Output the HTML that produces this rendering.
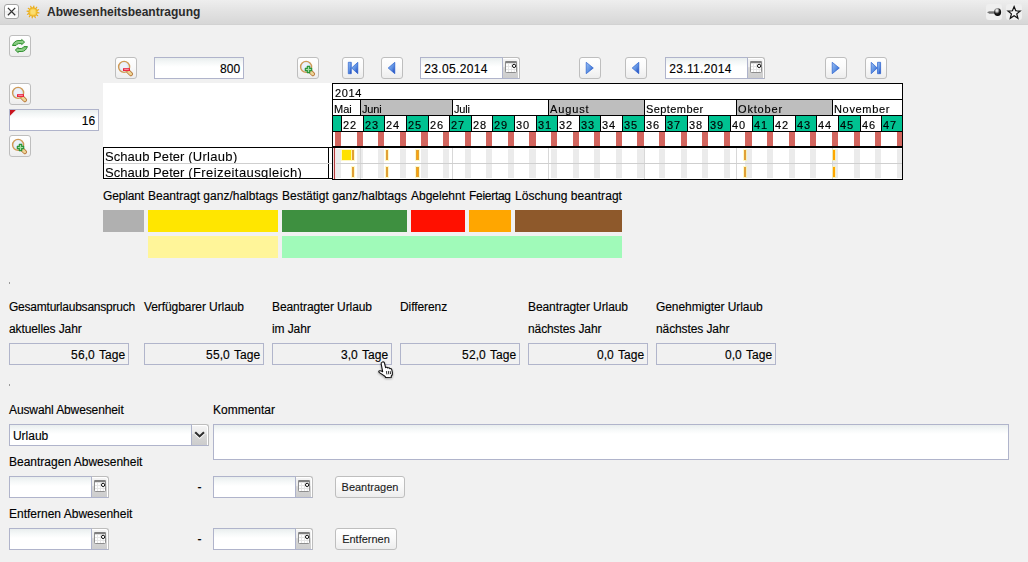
<!DOCTYPE html>
<html><head><meta charset="utf-8"><title>Abwesenheitsbeantragung</title>
<style>
html,body{margin:0;padding:0;}
body{width:1028px;height:562px;background:#F1F1F1;overflow:hidden;position:relative;font-family:"Liberation Sans",sans-serif;font-size:12px;color:#000;-webkit-text-stroke:0.14px #000;}
div{position:absolute;box-sizing:border-box;}
.t{white-space:pre;color:#000;}
.g{white-space:pre;color:#000;font-size:11px;line-height:14px;will-change:transform;-webkit-text-stroke:0.15px #000;}
.btn{border:1px solid #BEBEBE;border-radius:3px;background:linear-gradient(#FFFFFF,#FAFAFA 45%,#EDEDED);}
.inp{border:1px solid #B0B4CB;background:linear-gradient(#E9EEEE,#F4F7F7 4px,#FFFFFF 9px);}
.iv{position:absolute;right:2.7px;top:0.8px;letter-spacing:0.1px;word-spacing:0.8px;line-height:20px;font-size:12px;white-space:pre;}
.calb{border:1px solid #BDBDBD;border-left:1px solid #AEB3CB;border-bottom:1px solid #AEB3CB;border-top-right-radius:3px;background:linear-gradient(#F5F5F5,#EAEAEA 44%,#D7D7D7 48%,#CDCDCD);box-shadow:inset -1px 1px 0 #FFFFFF;}
.ro{border:1px solid #B1B5CB;background:#F1F1F1;}
</style></head><body>
<div style="left:0px;top:0px;width:1028px;height:25px;background:linear-gradient(#EEEEEE,#E4E4E4 40%,#D7D7D7);border-bottom:1px solid #D2D2D2;"></div>
<div style="left:4px;top:4px;width:15px;height:15px;border:1px solid #A4A4A4;border-radius:3px;background:linear-gradient(#FFFFFF,#FFFFFF 40%,#EFEFEF 50%,#FFFFFF);"><svg width="13" height="13" viewBox="0 0 13 13" style="position:absolute;left:0;top:0"><path d="M2.9 2.9 L10.2 10.2 M10.2 2.9 L2.9 10.2" stroke="#333" stroke-width="1.25"/></svg></div>
<svg width="16" height="16" viewBox="-8 -8 16 16" style="position:absolute;left:24.5px;top:3.9px"><circle r="7.2" fill="#E4E6F4" opacity="0.5"/><path d="M0 -4.4 L0 -6.0" stroke="#EBAE1A" stroke-width="1.25" stroke-linecap="round" transform="rotate(8)"/><path d="M0 -4.4 L0 -6.0" stroke="#EBAE1A" stroke-width="1.25" stroke-linecap="round" transform="rotate(38)"/><path d="M0 -4.4 L0 -6.0" stroke="#EBAE1A" stroke-width="1.25" stroke-linecap="round" transform="rotate(68)"/><path d="M0 -4.4 L0 -6.0" stroke="#EBAE1A" stroke-width="1.25" stroke-linecap="round" transform="rotate(98)"/><path d="M0 -4.4 L0 -6.0" stroke="#EBAE1A" stroke-width="1.25" stroke-linecap="round" transform="rotate(128)"/><path d="M0 -4.4 L0 -6.0" stroke="#EBAE1A" stroke-width="1.25" stroke-linecap="round" transform="rotate(158)"/><path d="M0 -4.4 L0 -6.0" stroke="#EBAE1A" stroke-width="1.25" stroke-linecap="round" transform="rotate(188)"/><path d="M0 -4.4 L0 -6.0" stroke="#EBAE1A" stroke-width="1.25" stroke-linecap="round" transform="rotate(218)"/><path d="M0 -4.4 L0 -6.0" stroke="#EBAE1A" stroke-width="1.25" stroke-linecap="round" transform="rotate(248)"/><path d="M0 -4.4 L0 -6.0" stroke="#EBAE1A" stroke-width="1.25" stroke-linecap="round" transform="rotate(278)"/><path d="M0 -4.4 L0 -6.0" stroke="#EBAE1A" stroke-width="1.25" stroke-linecap="round" transform="rotate(308)"/><path d="M0 -4.4 L0 -6.0" stroke="#EBAE1A" stroke-width="1.25" stroke-linecap="round" transform="rotate(338)"/><circle r="4.1" fill="#F8D04E" stroke="#EBAE1A" stroke-width="1.1"/><circle r="2.4" fill="#FBDD72"/></svg>
<div class="t" style="left:47px;top:3.84px;font-size:12px;line-height:16px;font-weight:bold;color:#2B2B2B;-webkit-text-stroke:0;">Abwesenheitsbeantragung</div>
<div style="left:986px;top:4px;width:16px;height:16px;background:#EFEFEF;border-radius:3px;"><svg width="16" height="16" viewBox="0 0 16 16" style="position:absolute;left:0;top:0"><defs><radialGradient id="pg" cx="0.4" cy="0.3" r="0.75"><stop offset="0" stop-color="#FFFFFF"/><stop offset="0.22" stop-color="#C8C8C8"/><stop offset="0.55" stop-color="#1C1C1C"/><stop offset="1" stop-color="#000"/></radialGradient></defs><path d="M1.1 8.3 L3.2 6.9 L9 6.9 L9 9.6 L3.2 9.6 Z" fill="#9A9A9A"/><path d="M1.1 8.3 L3.2 8.3 L9 8.3 L9 9.6 L3.2 9.6 Z" fill="#686868"/><ellipse cx="11.6" cy="8.1" rx="3.5" ry="3.9" fill="url(#pg)"/></svg></div>
<div style="left:1006px;top:4px;width:16px;height:16px;background:#EFEFEF;border-radius:3px;"><svg width="16" height="16" viewBox="0 0 16 16" style="position:absolute;left:0;top:0"><path transform="translate(8.1 8.7) scale(0.92) translate(-8.2 -8.1)" d="M8.2 1.4 L10 6 L14.9 6.3 L11.1 9.4 L12.4 14.2 L8.2 11.5 L4 14.2 L5.3 9.4 L1.5 6.3 L6.4 6 Z" fill="#F4F4F4" stroke="#111" stroke-width="1.3" stroke-linejoin="miter"/></svg></div>
<div class="btn" style="left:9px;top:35px;width:22px;height:22px;"><svg width="22" height="22" viewBox="0 0 22 22" style="position:absolute;left:0;top:0"><defs><linearGradient id="rg" x1="0" y1="0" x2="0" y2="1"><stop offset="0" stop-color="#A8DCA0"/><stop offset="1" stop-color="#6FBF6A"/></linearGradient></defs><path d="M2.5 9.5 C3.4 6.7 5.4 4.7 8 4.6 L11.7 4.6 L11.7 3.5 L14.6 6.1 L11.7 8.6 L11.7 7.6 L8.6 7.6 C7.4 7.8 6.6 8.5 6 9.5 Z" fill="url(#rg)" stroke="#2E8F2E" stroke-width="1" stroke-linejoin="round"/><path transform="rotate(180 9.95 10.05)" d="M2.5 9.5 C3.4 6.7 5.4 4.7 8 4.6 L11.7 4.6 L11.7 3.5 L14.6 6.1 L11.7 8.6 L11.7 7.6 L8.6 7.6 C7.4 7.8 6.6 8.5 6 9.5 Z" fill="url(#rg)" stroke="#2E8F2E" stroke-width="1" stroke-linejoin="round"/></svg></div>
<div class="btn" style="left:115px;top:57px;width:22px;height:22px;"><svg width="22" height="22" viewBox="0 0 22 22" style="position:absolute;left:-1.1px;top:-1.1px"><path d="M12.6 13.8 L15.9 17.1" stroke="#B9783A" stroke-width="4.3" stroke-linecap="round"/><path d="M12.8 14 L15.8 17" stroke="#EDD596" stroke-width="2.5" stroke-linecap="round"/><circle cx="9.1" cy="9.9" r="5.5" fill="#E3EAF7" stroke="#CF9A55" stroke-width="1.4"/><circle cx="8.6" cy="9.2" r="3.4" fill="#EEF2FA" opacity="0.8"/><rect x="8" y="11.2" width="7" height="2.8" fill="#EA1F3C"/><rect x="9.2" y="12.2" width="4.6" height="0.9" fill="#F9A9B3"/></svg></div>
<div class="inp" style="left:154px;top:57px;width:90px;height:22px;"><span class="iv">800</span></div>
<div class="btn" style="left:297px;top:57px;width:22px;height:22px;"><svg width="22" height="22" viewBox="0 0 22 22" style="position:absolute;left:-1.1px;top:-1.1px"><path d="M12.6 13.8 L15.9 17.1" stroke="#B9783A" stroke-width="4.3" stroke-linecap="round"/><path d="M12.8 14 L15.8 17" stroke="#EDD596" stroke-width="2.5" stroke-linecap="round"/><circle cx="9.1" cy="9.9" r="5.5" fill="#E3EAF7" stroke="#CF9A55" stroke-width="1.4"/><circle cx="8.6" cy="9.2" r="3.4" fill="#EEF2FA" opacity="0.8"/><path d="M10 9 h3 v2 h2 v3 h-2 v2 h-3 v-2 h-2 v-3 h2 z" fill="#2F9A3C" stroke="#1F8A2E" stroke-width="0.5"/><path d="M10.9 10 h1.2 v2.1 h2 v1 h-2 v2 h-1.2 v-2 h-2 v-1 h2 z" fill="#A6DDA6"/></svg></div>
<div class="btn" style="left:342px;top:57px;width:22px;height:22px;"><svg width="22" height="22" viewBox="0 0 22 22" style="position:absolute;left:-0.9px;top:-0.85px"><defs><linearGradient id="bgfirst" x1="0" y1="0" x2="1" y2="1"><stop offset="0" stop-color="#9CC0F2"/><stop offset="0.55" stop-color="#5C90E2"/><stop offset="1" stop-color="#1438B4"/></linearGradient></defs><rect x="6.3" y="5.3" width="3" height="11.4" fill="url(#bgfirst)" stroke="#2A62D0" stroke-width="0.7" stroke-linejoin="round"/><path d="M9.6 11 L15.8 5.3 L15.8 16.7 Z" fill="url(#bgfirst)" stroke="#2A62D0" stroke-width="0.7" stroke-linejoin="round"/></svg></div>
<div class="btn" style="left:381px;top:57px;width:22px;height:22px;"><svg width="22" height="22" viewBox="0 0 22 22" style="position:absolute;left:-0.9px;top:-0.85px"><defs><linearGradient id="bgprev" x1="0" y1="0" x2="1" y2="1"><stop offset="0" stop-color="#9CC0F2"/><stop offset="0.55" stop-color="#5C90E2"/><stop offset="1" stop-color="#1438B4"/></linearGradient></defs><path d="M7.2 11 L13.8 5.3 L13.8 16.7 Z" fill="url(#bgprev)" stroke="#2A62D0" stroke-width="0.7" stroke-linejoin="round"/></svg></div>
<div class="inp" style="left:420px;top:57px;width:83px;height:22px;"></div>
<div class="calb" style="left:502px;top:57px;width:18px;height:22px;"><svg width="12" height="12" viewBox="0 0 12 12" style="position:absolute;left:2px;top:3px"><rect x="0.5" y="0.5" width="11" height="11" rx="0.8" fill="#fff" stroke="#8E8E8E"/><path d="M0.3 0.9 Q0.3 0.1 1.1 0.1 H10.9 Q11.7 0.1 11.7 0.9 V2.3 H0.3 Z" fill="#808080"/><path d="M3.5 2.6 V11 M6.5 2.6 V11 M9.3 2.6 V11 M1 5.5 H11 M1 8.5 H11" stroke="#E6E6E6" stroke-width="1"/><circle cx="9.1" cy="4.9" r="1.65" fill="#fff" stroke="#000" stroke-width="0.95"/></svg></div>
<div class="t" style="left:424.3px;top:60.84px;font-size:12px;line-height:16px;letter-spacing:0.33px;">23.05.2014</div>
<div class="btn" style="left:579px;top:57px;width:22px;height:22px;"><svg width="22" height="22" viewBox="0 0 22 22" style="position:absolute;left:-0.9px;top:-0.85px"><defs><linearGradient id="bgnext" x1="0" y1="0" x2="1" y2="1"><stop offset="0" stop-color="#9CC0F2"/><stop offset="0.55" stop-color="#5C90E2"/><stop offset="1" stop-color="#1438B4"/></linearGradient></defs><path d="M14.3 11 L7.2 5.3 L7.2 16.7 Z" fill="url(#bgnext)" stroke="#2A62D0" stroke-width="0.7" stroke-linejoin="round"/></svg></div>
<div class="btn" style="left:625px;top:57px;width:22px;height:22px;"><svg width="22" height="22" viewBox="0 0 22 22" style="position:absolute;left:-0.9px;top:-0.85px"><defs><linearGradient id="bgprev" x1="0" y1="0" x2="1" y2="1"><stop offset="0" stop-color="#9CC0F2"/><stop offset="0.55" stop-color="#5C90E2"/><stop offset="1" stop-color="#1438B4"/></linearGradient></defs><path d="M7.2 11 L13.8 5.3 L13.8 16.7 Z" fill="url(#bgprev)" stroke="#2A62D0" stroke-width="0.7" stroke-linejoin="round"/></svg></div>
<div class="inp" style="left:665px;top:57px;width:83px;height:22px;"></div>
<div class="calb" style="left:747px;top:57px;width:18px;height:22px;"><svg width="12" height="12" viewBox="0 0 12 12" style="position:absolute;left:2px;top:3px"><rect x="0.5" y="0.5" width="11" height="11" rx="0.8" fill="#fff" stroke="#8E8E8E"/><path d="M0.3 0.9 Q0.3 0.1 1.1 0.1 H10.9 Q11.7 0.1 11.7 0.9 V2.3 H0.3 Z" fill="#808080"/><path d="M3.5 2.6 V11 M6.5 2.6 V11 M9.3 2.6 V11 M1 5.5 H11 M1 8.5 H11" stroke="#E6E6E6" stroke-width="1"/><circle cx="9.1" cy="4.9" r="1.65" fill="#fff" stroke="#000" stroke-width="0.95"/></svg></div>
<div class="t" style="left:669.3px;top:60.84px;font-size:12px;line-height:16px;letter-spacing:0.33px;">23.11.2014</div>
<div class="btn" style="left:825px;top:57px;width:22px;height:22px;"><svg width="22" height="22" viewBox="0 0 22 22" style="position:absolute;left:-0.9px;top:-0.85px"><defs><linearGradient id="bgnext" x1="0" y1="0" x2="1" y2="1"><stop offset="0" stop-color="#9CC0F2"/><stop offset="0.55" stop-color="#5C90E2"/><stop offset="1" stop-color="#1438B4"/></linearGradient></defs><path d="M14.3 11 L7.2 5.3 L7.2 16.7 Z" fill="url(#bgnext)" stroke="#2A62D0" stroke-width="0.7" stroke-linejoin="round"/></svg></div>
<div class="btn" style="left:865px;top:57px;width:22px;height:22px;"><svg width="22" height="22" viewBox="0 0 22 22" style="position:absolute;left:-0.9px;top:-0.85px"><defs><linearGradient id="bglast" x1="0" y1="0" x2="1" y2="1"><stop offset="0" stop-color="#9CC0F2"/><stop offset="0.55" stop-color="#5C90E2"/><stop offset="1" stop-color="#1438B4"/></linearGradient></defs><path d="M12.3 11 L6.2 5.3 L6.2 16.7 Z" fill="url(#bglast)" stroke="#2A62D0" stroke-width="0.7" stroke-linejoin="round"/><rect x="12.5" y="5.3" width="3.1" height="11.4" fill="url(#bglast)" stroke="#2A62D0" stroke-width="0.7" stroke-linejoin="round"/></svg></div>
<div class="btn" style="left:9px;top:83px;width:22px;height:22px;"><svg width="22" height="22" viewBox="0 0 22 22" style="position:absolute;left:-1.1px;top:-1.1px"><path d="M12.6 13.8 L15.9 17.1" stroke="#B9783A" stroke-width="4.3" stroke-linecap="round"/><path d="M12.8 14 L15.8 17" stroke="#EDD596" stroke-width="2.5" stroke-linecap="round"/><circle cx="9.1" cy="9.9" r="5.5" fill="#E3EAF7" stroke="#CF9A55" stroke-width="1.4"/><circle cx="8.6" cy="9.2" r="3.4" fill="#EEF2FA" opacity="0.8"/><rect x="8" y="11.2" width="7" height="2.8" fill="#EA1F3C"/><rect x="9.2" y="12.2" width="4.6" height="0.9" fill="#F9A9B3"/></svg></div>
<div class="inp" style="left:9px;top:109px;width:90px;height:22px;"><span class="iv">16</span></div>
<svg width="7" height="7" style="position:absolute;left:10px;top:110px"><path d="M0 0 H5.8 L0 5.8 Z" fill="#C8141E"/></svg>
<div class="btn" style="left:9px;top:135px;width:22px;height:22px;"><svg width="22" height="22" viewBox="0 0 22 22" style="position:absolute;left:-1.1px;top:-1.1px"><path d="M12.6 13.8 L15.9 17.1" stroke="#B9783A" stroke-width="4.3" stroke-linecap="round"/><path d="M12.8 14 L15.8 17" stroke="#EDD596" stroke-width="2.5" stroke-linecap="round"/><circle cx="9.1" cy="9.9" r="5.5" fill="#E3EAF7" stroke="#CF9A55" stroke-width="1.4"/><circle cx="8.6" cy="9.2" r="3.4" fill="#EEF2FA" opacity="0.8"/><path d="M10 9 h3 v2 h2 v3 h-2 v2 h-3 v-2 h-2 v-3 h2 z" fill="#2F9A3C" stroke="#1F8A2E" stroke-width="0.5"/><path d="M10.9 10 h1.2 v2.1 h2 v1 h-2 v2 h-1.2 v-2 h-2 v-1 h2 z" fill="#A6DDA6"/></svg></div>
<div style="left:103px;top:83px;width:800px;height:97px;background:#fff;"></div>
<div style="left:333px;top:100px;width:27px;height:15px;background:#fff;"></div>
<div style="left:361px;top:100px;width:91px;height:15px;background:#BEBEBE;"></div>
<div style="left:360px;top:100px;width:1px;height:15px;background:#000;"></div>
<div style="left:453px;top:100px;width:95px;height:15px;background:#fff;"></div>
<div style="left:452px;top:100px;width:1px;height:15px;background:#000;"></div>
<div style="left:549px;top:100px;width:95px;height:15px;background:#BEBEBE;"></div>
<div style="left:548px;top:100px;width:1px;height:15px;background:#000;"></div>
<div style="left:645px;top:100px;width:91px;height:15px;background:#fff;"></div>
<div style="left:644px;top:100px;width:1px;height:15px;background:#000;"></div>
<div style="left:737px;top:100px;width:95px;height:15px;background:#BEBEBE;"></div>
<div style="left:736px;top:100px;width:1px;height:15px;background:#000;"></div>
<div style="left:833px;top:100px;width:69px;height:15px;background:#fff;"></div>
<div style="left:832px;top:100px;width:1px;height:15px;background:#000;"></div>
<div style="left:333px;top:116px;width:8px;height:15px;background:#00C291;overflow:hidden;"></div>
<div style="left:341px;top:116px;width:22px;height:15px;background:#fff;overflow:hidden;"><div class="g" style="left:2.4px;top:2.2px;letter-spacing:0.85px;">22</div></div>
<div style="left:341px;top:116px;width:1px;height:15px;background:#000;"></div>
<div style="left:363px;top:116px;width:21px;height:15px;background:#00C291;overflow:hidden;"><div class="g" style="left:2.4px;top:2.2px;letter-spacing:0.85px;">23</div></div>
<div style="left:363px;top:116px;width:1px;height:15px;background:#000;"></div>
<div style="left:384px;top:116px;width:22px;height:15px;background:#fff;overflow:hidden;"><div class="g" style="left:2.4px;top:2.2px;letter-spacing:0.85px;">24</div></div>
<div style="left:384px;top:116px;width:1px;height:15px;background:#000;"></div>
<div style="left:406px;top:116px;width:22px;height:15px;background:#00C291;overflow:hidden;"><div class="g" style="left:2.4px;top:2.2px;letter-spacing:0.85px;">25</div></div>
<div style="left:406px;top:116px;width:1px;height:15px;background:#000;"></div>
<div style="left:428px;top:116px;width:21px;height:15px;background:#fff;overflow:hidden;"><div class="g" style="left:2.4px;top:2.2px;letter-spacing:0.85px;">26</div></div>
<div style="left:428px;top:116px;width:1px;height:15px;background:#000;"></div>
<div style="left:449px;top:116px;width:22px;height:15px;background:#00C291;overflow:hidden;"><div class="g" style="left:2.4px;top:2.2px;letter-spacing:0.85px;">27</div></div>
<div style="left:449px;top:116px;width:1px;height:15px;background:#000;"></div>
<div style="left:471px;top:116px;width:21px;height:15px;background:#fff;overflow:hidden;"><div class="g" style="left:2.4px;top:2.2px;letter-spacing:0.85px;">28</div></div>
<div style="left:471px;top:116px;width:1px;height:15px;background:#000;"></div>
<div style="left:492px;top:116px;width:22px;height:15px;background:#00C291;overflow:hidden;"><div class="g" style="left:2.4px;top:2.2px;letter-spacing:0.85px;">29</div></div>
<div style="left:492px;top:116px;width:1px;height:15px;background:#000;"></div>
<div style="left:514px;top:116px;width:22px;height:15px;background:#fff;overflow:hidden;"><div class="g" style="left:2.4px;top:2.2px;letter-spacing:0.85px;">30</div></div>
<div style="left:514px;top:116px;width:1px;height:15px;background:#000;"></div>
<div style="left:536px;top:116px;width:21px;height:15px;background:#00C291;overflow:hidden;"><div class="g" style="left:2.4px;top:2.2px;letter-spacing:0.85px;">31</div></div>
<div style="left:536px;top:116px;width:1px;height:15px;background:#000;"></div>
<div style="left:557px;top:116px;width:22px;height:15px;background:#fff;overflow:hidden;"><div class="g" style="left:2.4px;top:2.2px;letter-spacing:0.85px;">32</div></div>
<div style="left:557px;top:116px;width:1px;height:15px;background:#000;"></div>
<div style="left:579px;top:116px;width:21px;height:15px;background:#00C291;overflow:hidden;"><div class="g" style="left:2.4px;top:2.2px;letter-spacing:0.85px;">33</div></div>
<div style="left:579px;top:116px;width:1px;height:15px;background:#000;"></div>
<div style="left:600px;top:116px;width:22px;height:15px;background:#fff;overflow:hidden;"><div class="g" style="left:2.4px;top:2.2px;letter-spacing:0.85px;">34</div></div>
<div style="left:600px;top:116px;width:1px;height:15px;background:#000;"></div>
<div style="left:622px;top:116px;width:22px;height:15px;background:#00C291;overflow:hidden;"><div class="g" style="left:2.4px;top:2.2px;letter-spacing:0.85px;">35</div></div>
<div style="left:622px;top:116px;width:1px;height:15px;background:#000;"></div>
<div style="left:644px;top:116px;width:21px;height:15px;background:#fff;overflow:hidden;"><div class="g" style="left:2.4px;top:2.2px;letter-spacing:0.85px;">36</div></div>
<div style="left:644px;top:116px;width:1px;height:15px;background:#000;"></div>
<div style="left:665px;top:116px;width:22px;height:15px;background:#00C291;overflow:hidden;"><div class="g" style="left:2.4px;top:2.2px;letter-spacing:0.85px;">37</div></div>
<div style="left:665px;top:116px;width:1px;height:15px;background:#000;"></div>
<div style="left:687px;top:116px;width:21px;height:15px;background:#fff;overflow:hidden;"><div class="g" style="left:2.4px;top:2.2px;letter-spacing:0.85px;">38</div></div>
<div style="left:687px;top:116px;width:1px;height:15px;background:#000;"></div>
<div style="left:708px;top:116px;width:22px;height:15px;background:#00C291;overflow:hidden;"><div class="g" style="left:2.4px;top:2.2px;letter-spacing:0.85px;">39</div></div>
<div style="left:708px;top:116px;width:1px;height:15px;background:#000;"></div>
<div style="left:730px;top:116px;width:22px;height:15px;background:#fff;overflow:hidden;"><div class="g" style="left:2.4px;top:2.2px;letter-spacing:0.85px;">40</div></div>
<div style="left:730px;top:116px;width:1px;height:15px;background:#000;"></div>
<div style="left:752px;top:116px;width:21px;height:15px;background:#00C291;overflow:hidden;"><div class="g" style="left:2.4px;top:2.2px;letter-spacing:0.85px;">41</div></div>
<div style="left:752px;top:116px;width:1px;height:15px;background:#000;"></div>
<div style="left:773px;top:116px;width:22px;height:15px;background:#fff;overflow:hidden;"><div class="g" style="left:2.4px;top:2.2px;letter-spacing:0.85px;">42</div></div>
<div style="left:773px;top:116px;width:1px;height:15px;background:#000;"></div>
<div style="left:795px;top:116px;width:21px;height:15px;background:#00C291;overflow:hidden;"><div class="g" style="left:2.4px;top:2.2px;letter-spacing:0.85px;">43</div></div>
<div style="left:795px;top:116px;width:1px;height:15px;background:#000;"></div>
<div style="left:816px;top:116px;width:22px;height:15px;background:#fff;overflow:hidden;"><div class="g" style="left:2.4px;top:2.2px;letter-spacing:0.85px;">44</div></div>
<div style="left:816px;top:116px;width:1px;height:15px;background:#000;"></div>
<div style="left:838px;top:116px;width:22px;height:15px;background:#00C291;overflow:hidden;"><div class="g" style="left:2.4px;top:2.2px;letter-spacing:0.85px;">45</div></div>
<div style="left:838px;top:116px;width:1px;height:15px;background:#000;"></div>
<div style="left:860px;top:116px;width:21px;height:15px;background:#fff;overflow:hidden;"><div class="g" style="left:2.4px;top:2.2px;letter-spacing:0.85px;">46</div></div>
<div style="left:860px;top:116px;width:1px;height:15px;background:#000;"></div>
<div style="left:881px;top:116px;width:21px;height:15px;background:#00C291;overflow:hidden;"><div class="g" style="left:2.4px;top:2.2px;letter-spacing:0.85px;">47</div></div>
<div style="left:881px;top:116px;width:1px;height:15px;background:#000;"></div>
<div style="left:335px;top:132px;width:6px;height:14px;background:#D2665F;"></div>
<div style="left:335px;top:149px;width:6px;height:29px;background:#EBEBEB;"></div>
<div style="left:357px;top:132px;width:6px;height:14px;background:#D2665F;"></div>
<div style="left:357px;top:149px;width:6px;height:29px;background:#EBEBEB;"></div>
<div style="left:378px;top:132px;width:6px;height:14px;background:#D2665F;"></div>
<div style="left:378px;top:149px;width:6px;height:29px;background:#EBEBEB;"></div>
<div style="left:400px;top:132px;width:6px;height:14px;background:#D2665F;"></div>
<div style="left:400px;top:149px;width:6px;height:29px;background:#EBEBEB;"></div>
<div style="left:421px;top:132px;width:7px;height:14px;background:#D2665F;"></div>
<div style="left:421px;top:149px;width:7px;height:29px;background:#EBEBEB;"></div>
<div style="left:443px;top:132px;width:6px;height:14px;background:#D2665F;"></div>
<div style="left:443px;top:149px;width:6px;height:29px;background:#EBEBEB;"></div>
<div style="left:465px;top:132px;width:6px;height:14px;background:#D2665F;"></div>
<div style="left:465px;top:149px;width:6px;height:29px;background:#EBEBEB;"></div>
<div style="left:486px;top:132px;width:6px;height:14px;background:#D2665F;"></div>
<div style="left:486px;top:149px;width:6px;height:29px;background:#EBEBEB;"></div>
<div style="left:508px;top:132px;width:6px;height:14px;background:#D2665F;"></div>
<div style="left:508px;top:149px;width:6px;height:29px;background:#EBEBEB;"></div>
<div style="left:529px;top:132px;width:7px;height:14px;background:#D2665F;"></div>
<div style="left:529px;top:149px;width:7px;height:29px;background:#EBEBEB;"></div>
<div style="left:551px;top:132px;width:6px;height:14px;background:#D2665F;"></div>
<div style="left:551px;top:149px;width:6px;height:29px;background:#EBEBEB;"></div>
<div style="left:573px;top:132px;width:6px;height:14px;background:#D2665F;"></div>
<div style="left:573px;top:149px;width:6px;height:29px;background:#EBEBEB;"></div>
<div style="left:594px;top:132px;width:6px;height:14px;background:#D2665F;"></div>
<div style="left:594px;top:149px;width:6px;height:29px;background:#EBEBEB;"></div>
<div style="left:616px;top:132px;width:6px;height:14px;background:#D2665F;"></div>
<div style="left:616px;top:149px;width:6px;height:29px;background:#EBEBEB;"></div>
<div style="left:637px;top:132px;width:7px;height:14px;background:#D2665F;"></div>
<div style="left:637px;top:149px;width:7px;height:29px;background:#EBEBEB;"></div>
<div style="left:659px;top:132px;width:6px;height:14px;background:#D2665F;"></div>
<div style="left:659px;top:149px;width:6px;height:29px;background:#EBEBEB;"></div>
<div style="left:681px;top:132px;width:6px;height:14px;background:#D2665F;"></div>
<div style="left:681px;top:149px;width:6px;height:29px;background:#EBEBEB;"></div>
<div style="left:702px;top:132px;width:6px;height:14px;background:#D2665F;"></div>
<div style="left:702px;top:149px;width:6px;height:29px;background:#EBEBEB;"></div>
<div style="left:724px;top:132px;width:6px;height:14px;background:#D2665F;"></div>
<div style="left:724px;top:149px;width:6px;height:29px;background:#EBEBEB;"></div>
<div style="left:745px;top:132px;width:7px;height:14px;background:#D2665F;"></div>
<div style="left:745px;top:149px;width:7px;height:29px;background:#EBEBEB;"></div>
<div style="left:767px;top:132px;width:6px;height:14px;background:#D2665F;"></div>
<div style="left:767px;top:149px;width:6px;height:29px;background:#EBEBEB;"></div>
<div style="left:789px;top:132px;width:6px;height:14px;background:#D2665F;"></div>
<div style="left:789px;top:149px;width:6px;height:29px;background:#EBEBEB;"></div>
<div style="left:810px;top:132px;width:6px;height:14px;background:#D2665F;"></div>
<div style="left:810px;top:149px;width:6px;height:29px;background:#EBEBEB;"></div>
<div style="left:832px;top:132px;width:6px;height:14px;background:#D2665F;"></div>
<div style="left:832px;top:149px;width:6px;height:29px;background:#EBEBEB;"></div>
<div style="left:854px;top:132px;width:6px;height:14px;background:#D2665F;"></div>
<div style="left:854px;top:149px;width:6px;height:29px;background:#EBEBEB;"></div>
<div style="left:875px;top:132px;width:6px;height:14px;background:#D2665F;"></div>
<div style="left:875px;top:149px;width:6px;height:29px;background:#EBEBEB;"></div>
<div style="left:897px;top:132px;width:5px;height:14px;background:#D2665F;"></div>
<div style="left:897px;top:149px;width:5px;height:29px;background:#EBEBEB;"></div>
<div style="left:360px;top:148px;width:1px;height:31px;background:#D8D8D8;"></div>
<div style="left:452px;top:148px;width:1px;height:31px;background:#D8D8D8;"></div>
<div style="left:548px;top:148px;width:1px;height:31px;background:#D8D8D8;"></div>
<div style="left:644px;top:148px;width:1px;height:31px;background:#D8D8D8;"></div>
<div style="left:736px;top:148px;width:1px;height:31px;background:#D8D8D8;"></div>
<div style="left:832px;top:148px;width:1px;height:31px;background:#D8D8D8;"></div>
<div style="left:332px;top:83px;width:571px;height:1px;background:#000;"></div>
<div style="left:332px;top:99px;width:571px;height:1px;background:#000;"></div>
<div style="left:332px;top:115px;width:571px;height:1px;background:#000;"></div>
<div style="left:332px;top:131px;width:571px;height:1px;background:#000;"></div>
<div style="left:332px;top:146px;width:571px;height:2px;background:#000;"></div>
<div style="left:332px;top:83px;width:1px;height:97px;background:#000;"></div>
<div style="left:902px;top:83px;width:1px;height:97px;background:#000;"></div>
<div style="left:332px;top:179px;width:571px;height:1px;background:#000;"></div>
<div style="left:104px;top:163px;width:798px;height:1px;background:#CFCFCF;"></div>
<div style="left:332px;top:163px;width:1px;height:1px;background:#000;"></div>
<div style="left:334px;top:148px;width:1px;height:31px;background:#B43C3C;"></div>
<div style="left:333px;top:148px;width:1px;height:31px;background:#F3DCDC;"></div>
<div style="left:335px;top:148px;width:1px;height:31px;background:#F6E4E4;"></div>
<div class="g" style="left:335px;top:86.2px;letter-spacing:0.65px;">2014</div>
<div class="g" style="left:333.8px;top:102.2px;letter-spacing:0px;">Mai</div>
<div class="g" style="left:361.8px;top:102.2px;letter-spacing:-0.2px;">Juni</div>
<div class="g" style="left:453.8px;top:102.2px;letter-spacing:-0.15px;">Juli</div>
<div class="g" style="left:549.8px;top:102.2px;letter-spacing:0.86px;">August</div>
<div class="g" style="left:645.8px;top:102.2px;letter-spacing:0.42px;">September</div>
<div class="g" style="left:737.8px;top:102.2px;letter-spacing:0.83px;">Oktober</div>
<div class="g" style="left:833.8px;top:102.2px;letter-spacing:0.67px;">November</div>
<div style="left:103px;top:147px;width:226px;height:32px;border:1px solid #000;background:#fff;"></div>
<div style="left:104px;top:163px;width:228px;height:1px;background:#CFCFCF;"></div>
<div style="left:328px;top:178px;width:5px;height:1px;background:#000;"></div>
<div style="left:328px;top:147px;width:5px;height:1px;background:#000;"></div>
<div style="left:104px;top:148px;width:224px;height:15px;overflow:hidden;"><div class="t" style="left:1.3px;top:1.3px;font-size:13px;line-height:16px;will-change:transform;-webkit-text-stroke:0.08px #000;"><span style="letter-spacing:0.06px">Schaub Peter </span><span style="letter-spacing:0.3px">(Urlaub)</span></div></div>
<div style="left:104px;top:164px;width:224px;height:14px;overflow:hidden;"><div class="t" style="left:1.3px;top:1.3px;font-size:13px;line-height:16px;will-change:transform;-webkit-text-stroke:0.08px #000;"><span style="letter-spacing:0.06px">Schaub Peter </span><span style="letter-spacing:0.42px">(Freizeitausgleich)</span></div></div>
<div style="left:342px;top:150px;width:9px;height:10px;background:#FFE100;box-shadow:0 0 0 1px rgba(255,240,120,0.45);"></div>
<div style="left:352px;top:150px;width:2px;height:10px;background:#E1A037;box-shadow:0 0 0 1px rgba(255,246,150,0.55);"></div>
<div style="left:352px;top:167px;width:2px;height:10px;background:#E1A037;box-shadow:0 0 0 1px rgba(255,246,150,0.55);"></div>
<div style="left:386px;top:150px;width:2px;height:10px;background:#E1A037;box-shadow:0 0 0 1px rgba(255,246,150,0.55);"></div>
<div style="left:386px;top:167px;width:2px;height:10px;background:#E1A037;box-shadow:0 0 0 1px rgba(255,246,150,0.55);"></div>
<div style="left:416px;top:150px;width:3px;height:10px;background:#E1A037;box-shadow:0 0 0 1px rgba(255,246,150,0.55);"><div style="left:1px;top:1px;right:1px;bottom:1px;background:#FFA600"></div></div>
<div style="left:416px;top:167px;width:3px;height:10px;background:#E1A037;box-shadow:0 0 0 1px rgba(255,246,150,0.55);"><div style="left:1px;top:1px;right:1px;bottom:1px;background:#FFA600"></div></div>
<div style="left:744px;top:150px;width:2px;height:10px;background:#E1A037;box-shadow:0 0 0 1px rgba(255,246,150,0.55);"></div>
<div style="left:744px;top:167px;width:2px;height:10px;background:#E1A037;box-shadow:0 0 0 1px rgba(255,246,150,0.55);"></div>
<div style="left:833px;top:150px;width:2px;height:10px;background:#FFA600;box-shadow:0 0 0 1px rgba(255,246,150,0.55);"></div>
<div style="left:833px;top:167px;width:2px;height:10px;background:#FFA600;box-shadow:0 0 0 1px rgba(255,246,150,0.55);"></div>
<div class="t" style="left:103px;top:187.64px;font-size:12px;line-height:16px;letter-spacing:-0.17px;">Geplant</div>
<div class="t" style="left:148px;top:187.64px;font-size:12px;line-height:16px;letter-spacing:0px;">Beantragt ganz/halbtags</div>
<div class="t" style="left:282px;top:187.64px;font-size:12px;line-height:16px;letter-spacing:0.01px;">Bestätigt ganz/halbtags</div>
<div class="t" style="left:411px;top:187.64px;font-size:12px;line-height:16px;letter-spacing:0px;">Abgelehnt</div>
<div class="t" style="left:469px;top:187.64px;font-size:12px;line-height:16px;letter-spacing:-0.29px;">Feiertag</div>
<div class="t" style="left:515px;top:187.64px;font-size:12px;line-height:16px;letter-spacing:0.05px;">Löschung beantragt</div>
<div style="left:103px;top:210px;width:41px;height:22px;background:#B0B0B0;"></div>
<div style="left:148px;top:210px;width:130px;height:22px;background:#FFE600;"></div>
<div style="left:282px;top:210px;width:125px;height:22px;background:#3E9040;"></div>
<div style="left:411px;top:210px;width:54px;height:22px;background:#FF1000;"></div>
<div style="left:469px;top:210px;width:42px;height:22px;background:#FFA600;"></div>
<div style="left:515px;top:210px;width:107px;height:22px;background:#8E592B;"></div>
<div style="left:148px;top:236px;width:130px;height:22px;background:#FFF599;"></div>
<div style="left:282px;top:236px;width:340px;height:22px;background:#A0FAB9;"></div>
<div style="left:9px;top:282px;width:1px;height:2px;background:#9A9A9A;"></div>
<div style="left:9px;top:384px;width:1px;height:2px;background:#9A9A9A;"></div>
<div class="t" style="left:9px;top:298.54px;font-size:12px;line-height:16px;letter-spacing:-0.23px;">Gesamturlaubsanspruch</div>
<div class="t" style="left:9px;top:320.74px;font-size:12px;line-height:16px;letter-spacing:-0.1px;">aktuelles Jahr</div>
<div class="ro" style="left:9px;top:343px;width:120px;height:22px;"><span class="iv">56,0 Tage</span></div>
<div class="t" style="left:144px;top:298.54px;font-size:12px;line-height:16px;letter-spacing:-0.08px;">Verfügbarer Urlaub</div>
<div class="ro" style="left:144px;top:343px;width:120px;height:22px;"><span class="iv">55,0 Tage</span></div>
<div class="t" style="left:272px;top:298.54px;font-size:12px;line-height:16px;letter-spacing:-0.08px;">Beantragter Urlaub</div>
<div class="t" style="left:272px;top:320.74px;font-size:12px;line-height:16px;letter-spacing:-0.1px;">im Jahr</div>
<div class="ro" style="left:272px;top:343px;width:120px;height:22px;"><span class="iv">3,0 Tage</span></div>
<div class="t" style="left:400px;top:298.54px;font-size:12px;line-height:16px;letter-spacing:-0.08px;">Differenz</div>
<div class="ro" style="left:400px;top:343px;width:120px;height:22px;"><span class="iv">52,0 Tage</span></div>
<div class="t" style="left:528px;top:298.54px;font-size:12px;line-height:16px;letter-spacing:-0.08px;">Beantragter Urlaub</div>
<div class="t" style="left:528px;top:320.74px;font-size:12px;line-height:16px;letter-spacing:-0.1px;">nächstes Jahr</div>
<div class="ro" style="left:528px;top:343px;width:120px;height:22px;"><span class="iv">0,0 Tage</span></div>
<div class="t" style="left:656px;top:298.54px;font-size:12px;line-height:16px;letter-spacing:-0.08px;">Genehmigter Urlaub</div>
<div class="t" style="left:656px;top:320.74px;font-size:12px;line-height:16px;letter-spacing:-0.1px;">nächstes Jahr</div>
<div class="ro" style="left:656px;top:343px;width:120px;height:22px;"><span class="iv">0,0 Tage</span></div>
<svg width="18" height="17.5" viewBox="0 0 18 19" preserveAspectRatio="none" style="position:absolute;left:377px;top:361.3px;filter:drop-shadow(0.5px 1px 0.8px rgba(0,0,0,0.35))"><path d="M5.2 1.2 C6.3 0.6 7.2 1.2 7.5 2.4 L8.6 7.2 C9.4 6.6 10.3 6.9 10.7 7.6 C11.5 7.1 12.5 7.4 12.8 8.3 C13.7 8 14.6 8.5 14.8 9.5 L15.4 12.6 C15.7 14.2 15.2 15.4 14.2 16.4 L14.4 17.6 L8.6 18 L8.3 17 C6.6 15.8 4.6 13.9 2.4 12.6 C1.4 12 1.6 10.6 2.9 10.5 C4 10.4 4.9 11 5.7 11.7 L4.2 3.3 C4 2.3 4.4 1.6 5.2 1.2 Z" fill="#fff" stroke="#111" stroke-width="1.1" stroke-linejoin="round"/><path d="M9.4 11 L9.9 14.6 M11.3 10.8 L11.8 14.4 M13.2 11 L13.6 14.2" stroke="#111" stroke-width="0.9"/></svg>
<div class="t" style="left:9px;top:401.54px;font-size:12px;line-height:16px;letter-spacing:-0.11px;">Auswahl Abwesenheit</div>
<div class="t" style="left:213px;top:401.54px;font-size:12px;line-height:16px;">Kommentar</div>
<div class="inp" style="left:9px;top:424px;width:183px;height:22px;"><span style="position:absolute;left:2.9px;top:0.8px;line-height:21px;font-size:12px;">Urlaub</span></div>
<div class="calb" style="left:191px;top:424px;width:18px;height:22px;"><svg width="16" height="20" viewBox="0 0 16 20" style="position:absolute;left:0;top:-1px"><path d="M3.2 8.4 L7.6 12.6 L12 8.4" fill="none" stroke="#fff" stroke-width="2.2" transform="translate(0,1)"/><path d="M3.2 8.2 L7.6 12.4 L12 8.2" fill="none" stroke="#2D2D2D" stroke-width="2.1"/></svg></div>
<div class="inp" style="left:213px;top:424px;width:796px;height:36px;"></div>
<div class="t" style="left:9px;top:453.94px;font-size:12px;line-height:16px;">Beantragen Abwesenheit</div>
<div class="inp" style="left:9px;top:476px;width:83px;height:22px;"></div>
<div class="calb" style="left:91px;top:476px;width:18px;height:22px;"><svg width="12" height="12" viewBox="0 0 12 12" style="position:absolute;left:2px;top:3px"><rect x="0.5" y="0.5" width="11" height="11" rx="0.8" fill="#fff" stroke="#8E8E8E"/><path d="M0.3 0.9 Q0.3 0.1 1.1 0.1 H10.9 Q11.7 0.1 11.7 0.9 V2.3 H0.3 Z" fill="#808080"/><path d="M3.5 2.6 V11 M6.5 2.6 V11 M9.3 2.6 V11 M1 5.5 H11 M1 8.5 H11" stroke="#E6E6E6" stroke-width="1"/><circle cx="9.1" cy="4.9" r="1.65" fill="#fff" stroke="#000" stroke-width="0.95"/></svg></div>
<div class="t" style="left:197.6px;top:479.04px;font-size:12px;line-height:16px;">-</div>
<div class="inp" style="left:213px;top:476px;width:83px;height:22px;"></div>
<div class="calb" style="left:295px;top:476px;width:18px;height:22px;"><svg width="12" height="12" viewBox="0 0 12 12" style="position:absolute;left:2px;top:3px"><rect x="0.5" y="0.5" width="11" height="11" rx="0.8" fill="#fff" stroke="#8E8E8E"/><path d="M0.3 0.9 Q0.3 0.1 1.1 0.1 H10.9 Q11.7 0.1 11.7 0.9 V2.3 H0.3 Z" fill="#808080"/><path d="M3.5 2.6 V11 M6.5 2.6 V11 M9.3 2.6 V11 M1 5.5 H11 M1 8.5 H11" stroke="#E6E6E6" stroke-width="1"/><circle cx="9.1" cy="4.9" r="1.65" fill="#fff" stroke="#000" stroke-width="0.95"/></svg></div>
<div class="btn" style="left:335px;top:476px;width:70px;height:22px;"><span style="position:absolute;left:0;right:0;top:0;text-align:center;line-height:20.4px;font-size:11px;color:#1C1C1C;-webkit-text-stroke:0.1px #1C1C1C;">Beantragen</span></div>
<div class="t" style="left:9px;top:506.24px;font-size:12px;line-height:16px;">Entfernen Abwesenheit</div>
<div class="inp" style="left:9px;top:528px;width:83px;height:22px;"></div>
<div class="calb" style="left:91px;top:528px;width:18px;height:22px;"><svg width="12" height="12" viewBox="0 0 12 12" style="position:absolute;left:2px;top:3px"><rect x="0.5" y="0.5" width="11" height="11" rx="0.8" fill="#fff" stroke="#8E8E8E"/><path d="M0.3 0.9 Q0.3 0.1 1.1 0.1 H10.9 Q11.7 0.1 11.7 0.9 V2.3 H0.3 Z" fill="#808080"/><path d="M3.5 2.6 V11 M6.5 2.6 V11 M9.3 2.6 V11 M1 5.5 H11 M1 8.5 H11" stroke="#E6E6E6" stroke-width="1"/><circle cx="9.1" cy="4.9" r="1.65" fill="#fff" stroke="#000" stroke-width="0.95"/></svg></div>
<div class="t" style="left:197.6px;top:531.04px;font-size:12px;line-height:16px;">-</div>
<div class="inp" style="left:213px;top:528px;width:83px;height:22px;"></div>
<div class="calb" style="left:295px;top:528px;width:18px;height:22px;"><svg width="12" height="12" viewBox="0 0 12 12" style="position:absolute;left:2px;top:3px"><rect x="0.5" y="0.5" width="11" height="11" rx="0.8" fill="#fff" stroke="#8E8E8E"/><path d="M0.3 0.9 Q0.3 0.1 1.1 0.1 H10.9 Q11.7 0.1 11.7 0.9 V2.3 H0.3 Z" fill="#808080"/><path d="M3.5 2.6 V11 M6.5 2.6 V11 M9.3 2.6 V11 M1 5.5 H11 M1 8.5 H11" stroke="#E6E6E6" stroke-width="1"/><circle cx="9.1" cy="4.9" r="1.65" fill="#fff" stroke="#000" stroke-width="0.95"/></svg></div>
<div class="btn" style="left:335px;top:528px;width:62px;height:22px;"><span style="position:absolute;left:0;right:0;top:0;text-align:center;line-height:20.4px;font-size:11px;color:#1C1C1C;-webkit-text-stroke:0.1px #1C1C1C;">Entfernen</span></div>
</body></html>
